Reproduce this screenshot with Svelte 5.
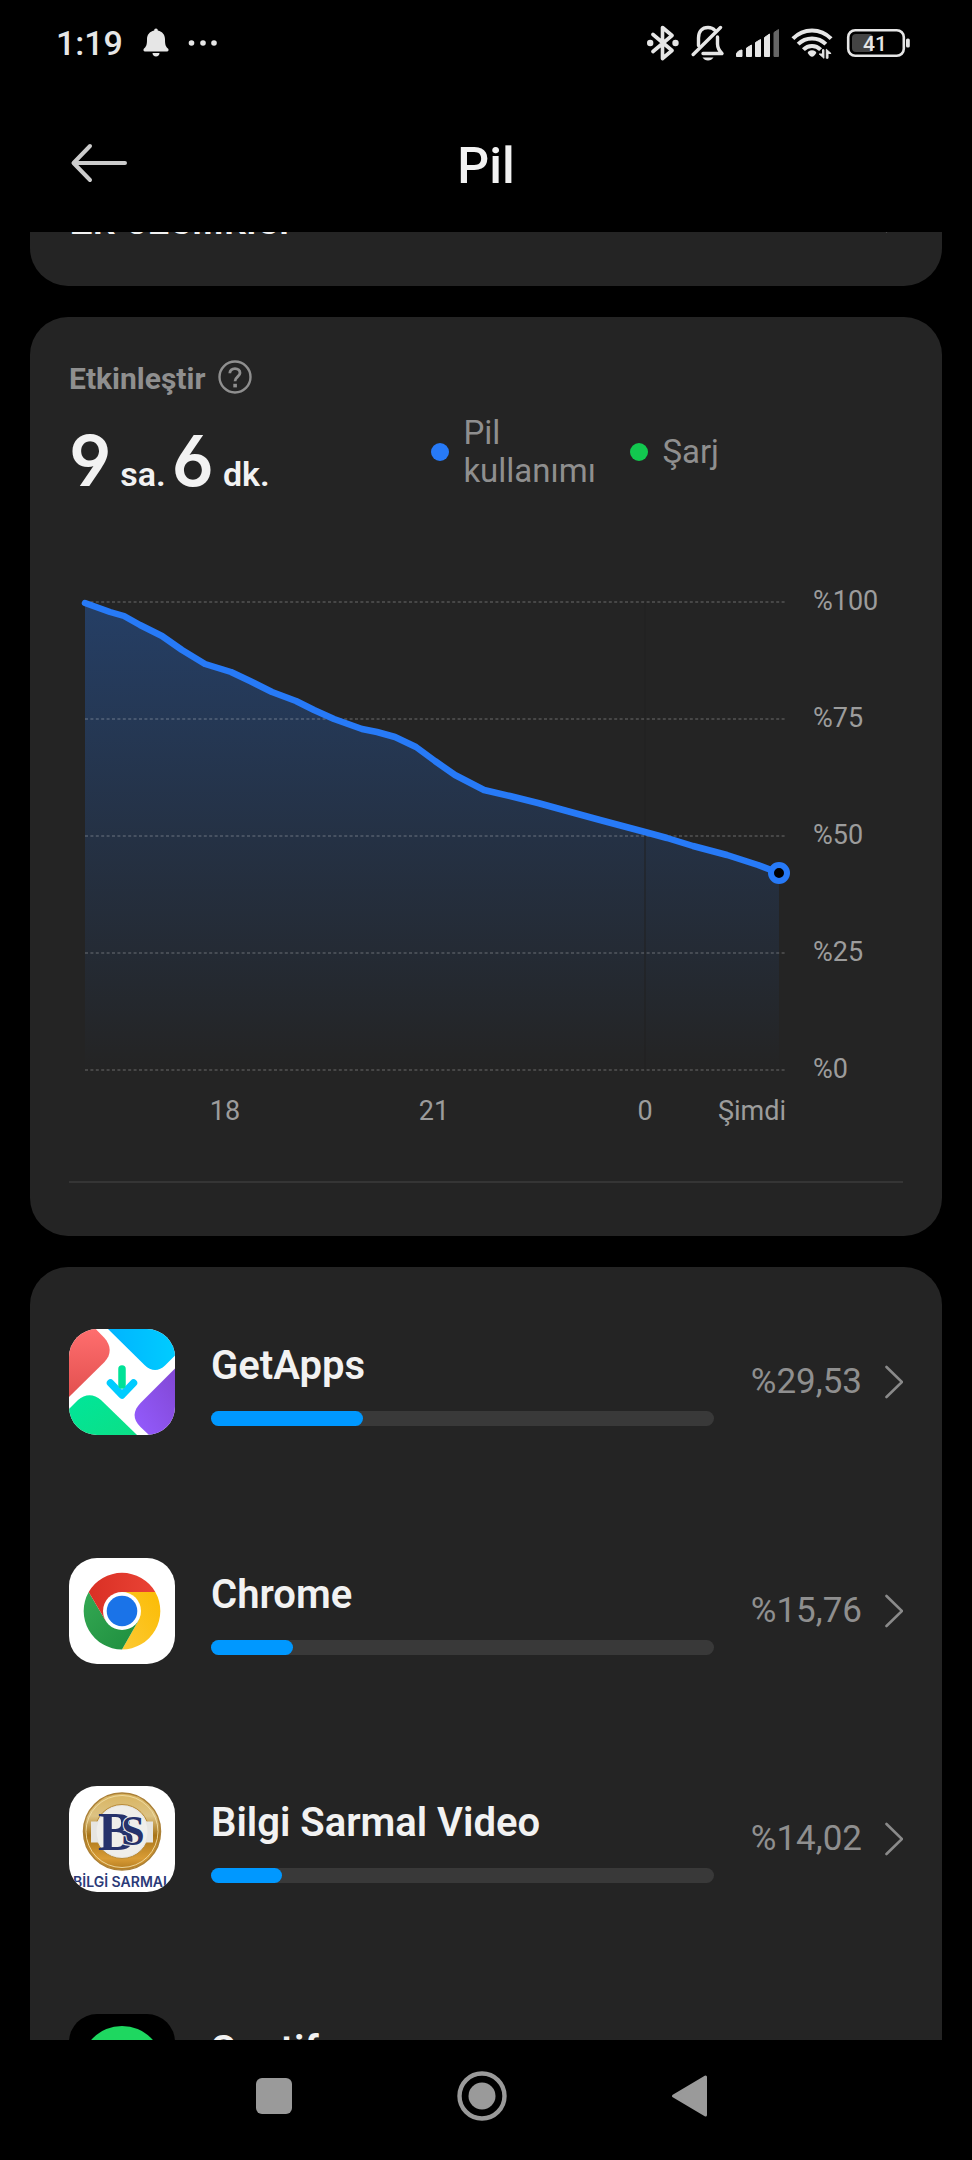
<script>
  const apps = [
    { id: 'getapps', name: 'GetApps', share: '%29,53', fill: 30.2 },
    { id: 'chrome', name: 'Chrome', share: '%15,76', fill: 16.3 },
    { id: 'bilgi', name: 'Bilgi Sarmal Video', share: '%14,02', fill: 14.2 },
    { id: 'spotify', name: 'Spotify', share: '%9,87', fill: 10 },
  ];

  // Battery level curve, in plot units: 694 wide, 468 high (0 = %100)
  const points = [
    [0, 1], [25, 10], [39, 14], [55, 23], [77, 34], [97, 48], [120, 62], [146, 70],
    [165, 79], [187, 90], [211, 99], [229, 108], [249, 117], [277, 127], [292, 130],
    [310, 135], [331, 145], [350, 159], [370, 173], [399, 188], [425, 194], [453, 201],
    [482, 209], [515, 218], [560, 230], [582, 236], [608, 244], [642, 253], [673, 263],
    [694, 271],
  ];
  const line = 'M' + points.map((p) => p.join(' ')).join('L');
  const area = line + 'V468H0Z';

  const levels = [100, 75, 50, 25, 0];
  const hours = [
    { label: '18', x: 140 },
    { label: '21', x: 349 },
    { label: '0', x: 560 },
  ];
</script>

{#snippet chevron()}
  <svg class="chevron" width="20" height="36" viewBox="0 0 20 36" aria-hidden="true">
    <path d="M3.500 3L19 18L3.500 33" fill="none" stroke="#8a8a8a" stroke-width="2.600" stroke-linecap="round" />
  </svg>
{/snippet}

<div class="screen">
  <div class="status">
    <span class="time">1:19</span>
    <svg class="bell" width="26" height="30" viewBox="0 0 26 30" aria-hidden="true">
      <path d="M13 0.500C14.200 0.500 14.800 1.400 14.800 2.600C19.500 3.600 22 7 22 11.500C22 17 22.800 18.600 25.200 20.800C26 22 25.500 23.500 24 23.500H2C0.500 23.500 0 22 0.800 20.800C3.200 18.600 4 17 4 11.500C4 7 6.500 3.600 11.200 2.600C11.200 1.400 11.800 0.500 13 0.500ZM9.500 25H16.500C16.500 27 15 28.500 13 28.500S9.500 27 9.500 25Z" fill="#e6e6e6" />
    </svg>
    <svg width="30" height="8" viewBox="0 0 30 8" aria-hidden="true">
      <circle cx="3.500" cy="4" r="2.800" fill="#e6e6e6" /><circle cx="15" cy="4" r="2.800" fill="#e6e6e6" /><circle cx="26" cy="4" r="2.800" fill="#e6e6e6" />
    </svg>

    <div class="indicators">
      <svg width="34" height="36" viewBox="0 0 34 36" aria-hidden="true">
        <path d="M6 9.500L25 25.500L15.500 33.500V2.500L25 10.500L6 26.500" fill="none" stroke="#e6e6e6" stroke-width="3.600" stroke-linejoin="round" stroke-linecap="round" />
        <circle cx="3.200" cy="18" r="3.200" fill="#e6e6e6" /><circle cx="28.500" cy="18" r="3.200" fill="#e6e6e6" />
      </svg>
      <svg width="34" height="36" viewBox="0 0 34 36" aria-hidden="true">
        <g fill="none" stroke="#e6e6e6" stroke-width="3.400" stroke-linecap="round">
          <path d="M7.500 20.500V13C7.500 6.500 11 2.500 17 2.500C20 2.500 22.300 3.500 24 5.500" />
          <path d="M26.500 12V19C26.500 23.500 28 25.500 31 28.500H12" stroke-linejoin="round" />
          <path d="M2.200 29.500L29.500 2.500" />
        </g>
        <path d="M11.500 32.500H22.500C21 34.500 19.500 35.500 17 35.500S13 34.500 11.500 32.500Z" fill="#e6e6e6" />
      </svg>
      <svg width="46" height="30" viewBox="0 0 46 30" aria-hidden="true">
        <path d="M1.500 26C1.500 24 5 22 7 22V28.500H1.500ZM11.500 20L16.500 17V28.500H11.500ZM20.500 14.500L25.500 11.500V28.500H20.500ZM29.500 9.500L34.500 6V28.500H29.500Z" fill="#e6e6e6" stroke="#e6e6e6" stroke-linejoin="round" />
        <path d="M39 4.500L43.500 1.500V28.500H39Z" fill="#666" stroke="#666" stroke-linejoin="round" />
      </svg>
      <svg width="42" height="34" viewBox="0 0 44 34" aria-hidden="true">
        <g fill="none" stroke="#e6e6e6" stroke-width="4.200">
          <path d="M2 12.500C13 1 31 1 42 12.500" />
          <path d="M7.500 18.200C15.500 10.200 28.500 10.200 36.500 18.200" />
          <path d="M13 24C18 18.800 26 18.800 31 24" />
        </g>
        <path d="M22 24.500C25 24.500 26.500 26 26.500 27.500C25 30 23.500 31.500 22 31.500S19 30 17.500 27.500C17.500 26 19 24.500 22 24.500Z" fill="#e6e6e6" />
        <path d="M34.500 24V33L29.500 28.500H33V24ZM37 33V23.500L42 28H38.800V33Z" fill="#e6e6e6" stroke="#e6e6e6" />
      </svg>
      <svg class="battery" width="66" height="30" viewBox="0 0 66 30" aria-hidden="true">
        <rect x="2.200" y="2.200" width="55.600" height="25.600" rx="7" fill="none" stroke="#e6e6e6" stroke-width="2.600" />
        <rect x="6" y="6" width="21" height="18" rx="4" fill="#444" />
        <rect x="60" y="10.500" width="3.800" height="9" rx="1.600" fill="#e6e6e6" />
        <text x="29" y="22.500" text-anchor="middle" class="charge">41</text>
      </svg>
    </div>
  </div>

  <header>
    <button class="back" aria-label="Geri">
      <svg width="58" height="42" viewBox="0 0 58 42" aria-hidden="true">
        <path d="M20 4L3.500 21L20 38M4 21H55" fill="none" stroke="#ccc" stroke-width="4" stroke-linecap="round" stroke-linejoin="round" />
      </svg>
    </button>
    <h1>Pil</h1>
  </header>

  <main>
    <section class="card extras">
      <a class="extra" href="#extras"><span>Ek özellikler</span>{@render chevron()}</a>
    </section>

    <section class="card usage">
      <div class="caption">
        <h2>Etkinleştir</h2>
        <button class="help" aria-label="Yardım">
          <svg width="36" height="40" viewBox="0 0 36 40" aria-hidden="true">
            <circle cx="18" cy="20" r="15.500" fill="none" stroke="#8f8f8f" stroke-width="2.400" />
            <path d="M12.800 16.300C12.800 13.300 15 11.600 18 11.600C21 11.600 23 13.500 23 16C23 19.500 18 19.800 18 24.300" fill="none" stroke="#8f8f8f" stroke-width="2.800" />
            <rect x="16.300" y="26.800" width="3.600" height="3.600" fill="#8f8f8f" />
          </svg>
        </button>
      </div>

      <div class="summary">
        <p class="duration">
          <b>9</b><span>sa.</span><b>6</b><span>dk.</span>
        </p>
        <ul class="legend">
          <li><i class="dot use"></i><span>Pil kullanımı</span></li>
          <li><i class="dot charging"></i><span>Şarj</span></li>
        </ul>
      </div>

      <svg class="chart" viewBox="0 0 834 560" role="img" aria-label="Pil kullanımı">
        <defs>
          <linearGradient id="fade" x1="0" y1="0" x2="0" y2="468" gradientUnits="userSpaceOnUse">
            <stop offset="0" stop-color="#277af7" stop-opacity="0.310" />
            <stop offset="1" stop-color="#277af7" stop-opacity="0" />
          </linearGradient>
        </defs>
        <g transform="translate(16 22)">
          <path d={area} fill="url(#fade)" />
          {#each levels as level, i}
            <path d="M0 {i * 117}H700" stroke="#fff" stroke-opacity="0.160" stroke-width="2" stroke-dasharray="3 2.400" />
            <text x="728" y={i * 117 + 8}>%{level}</text>
          {/each}
          <path d="M560 0V468" stroke="#1f1f1f" stroke-width="2" stroke-opacity="0.500" />
          <path d={line} fill="none" stroke="#277af7" stroke-width="6.500" stroke-linecap="round" stroke-linejoin="round" />
          <circle cx="694" cy="271" r="8" fill="#000" stroke="#277af7" stroke-width="6" />
          {#each hours as hour}
            <text x={hour.x} y="518" text-anchor="middle">{hour.label}</text>
          {/each}
          <text x="701" y="518" text-anchor="end">Şimdi</text>
        </g>
      </svg>
      <hr />
    </section>

    <section class="card apps">
      {#each apps as app}
        <a class="row" href="#{app.id}">
          <svg class="icon" viewBox="0 0 106 106" aria-hidden="true">
            {#if app.id === 'getapps'}
              <defs>
                <linearGradient id="ga-red" x1="0" y1="0" x2="0" y2="1"><stop stop-color="#ff6e6e" /><stop offset="1" stop-color="#e2504f" /></linearGradient>
                <linearGradient id="ga-blue" x1="0" y1="0" x2="1" y2="0"><stop stop-color="#00b4ff" /><stop offset="1" stop-color="#00ccff" /></linearGradient>
                <linearGradient id="ga-violet" x1="1" y1="0" x2="0" y2="1"><stop stop-color="#8247d4" /><stop offset="1" stop-color="#945cff" /></linearGradient>
                <linearGradient id="ga-green" x1="0" y1="0" x2="1" y2="1"><stop stop-color="#00e69a" /><stop offset="1" stop-color="#0cdf86" /></linearGradient>
              </defs>
              <rect width="106" height="106" fill="#fff" />
              <path d="M0 0H26.700L35 8.500C42.500 16.500 42.500 25.500 35.500 33L0 68Z" fill="url(#ga-red)" />
              <path d="M39 0L75.500 36C82 42.500 90 42.500 96 36.500L106 26.500V0Z" fill="url(#ga-blue)" />
              <path d="M106 39.500L72 73.500C63.500 82 63.500 90 71.500 98L80 106H106Z" fill="url(#ga-violet)" />
              <path d="M0 80L9 71C16 64.500 25 64.500 32 71L68 106H0Z" fill="url(#ga-green)" />
              <path d="M41.500 54L53 66L64.500 54" fill="none" stroke="#00ccff" stroke-width="7.500" stroke-linecap="round" stroke-linejoin="round" />
              <path d="M53 40V56" fill="none" stroke="#00e297" stroke-width="7.500" stroke-linecap="round" />
            {:else if app.id === 'chrome'}
              <defs>
                <linearGradient id="ch-red" x1="0" y1="0" x2="1" y2="0"><stop stop-color="#d93025" /><stop offset="1" stop-color="#ea4335" /></linearGradient>
                <linearGradient id="ch-green" x1="0" y1="0" x2="1" y2="1"><stop stop-color="#34a853" /><stop offset="1" stop-color="#1e8e3e" /></linearGradient>
                <linearGradient id="ch-yellow" x1="1" y1="0" x2="0" y2="1"><stop stop-color="#fbbc04" /><stop offset="1" stop-color="#fcc934" /></linearGradient>
              </defs>
              <rect width="106" height="106" fill="#fff" />
              <path d="M53 34H86.300A38.500 38.500 0 0 1 53 91.500L69.500 62.500L53 53Z" fill="url(#ch-yellow)" />
              <path d="M19.700 34A38.500 38.500 0 0 0 53 91.500L69.500 62.500L53 53L36.500 62.500Z" fill="url(#ch-green)" />
              <path d="M19.700 34A38.500 38.500 0 0 1 86.300 34H53V53L36.500 62.500Z" fill="url(#ch-red)" />
              <circle cx="53" cy="53" r="19" fill="#fff" /><circle cx="53" cy="53" r="15.300" fill="#1a73e8" />
            {:else if app.id === 'bilgi'}
              <defs>
                <linearGradient id="gold" x1="0" y1="0" x2="0" y2="1"><stop stop-color="#d9b45e" /><stop offset="0.300" stop-color="#dcc283" /><stop offset="0.550" stop-color="#a87418" /><stop offset="0.850" stop-color="#d99c35" /><stop offset="1" stop-color="#b27a20" /></linearGradient>
              </defs>
              <rect width="106" height="106" fill="#fff" />
              <circle cx="53" cy="45.500" r="38.500" fill="url(#gold)" stroke="#ab8037" stroke-width="1.500" />
              <circle cx="53" cy="45.500" r="36" fill="none" stroke="#f0dca5" stroke-width="0.900" />
              <circle cx="53" cy="45.500" r="27" fill="#e6e5e1" stroke="#b98a35" />
              <path d="M22 35.500H29L33 32H73L77 35.500H84V56.500H77L73 60H33L29 56.500H22Z" fill="#e6e5e1" />
              <circle cx="53" cy="45.500" r="25.500" fill="#efeeea" />
              <text x="47" y="64" text-anchor="middle" class="mark">B</text>
              <text x="64" y="59" text-anchor="middle" class="mark front">S</text>
              <text x="53" y="101" text-anchor="middle" class="wordmark">BİLGİ SARMAL</text>
            {:else}
              <rect width="106" height="106" fill="#000" />
              <circle cx="53" cy="53" r="41" fill="#1ed760" />
              <path d="M28 41C44 36 64 38 79 46M30 54C44 50 60 51 74 59M32 66C44 63 57 64 69 71" fill="none" stroke="#000" stroke-width="6" stroke-linecap="round" />
            {/if}
          </svg>
          <div class="detail">
            <span class="name">{app.name}</span>
            <span class="track"><span class="fill" style="width: {app.fill}%"></span></span>
          </div>
          <span class="share">{app.share}</span>
          {@render chevron()}
        </a>
      {/each}
    </section>
  </main>

  <nav>
    <button aria-label="Son uygulamalar">
      <svg width="52" height="52" viewBox="0 0 52 52" aria-hidden="true"><rect x="8" y="8" width="36" height="36" rx="6" fill="#9a9a9a" /></svg>
    </button>
    <button aria-label="Ana ekran">
      <svg width="52" height="52" viewBox="0 0 52 52" aria-hidden="true"><circle cx="26" cy="26" r="22.500" fill="none" stroke="#9a9a9a" stroke-width="4.400" /><circle cx="26" cy="26" r="13.500" fill="#9a9a9a" /></svg>
    </button>
    <button aria-label="Geri dön">
      <svg width="52" height="52" viewBox="0 0 52 52" aria-hidden="true"><path d="M9.500 26L41.500 7V45Z" fill="#9a9a9a" stroke="#9a9a9a" stroke-width="3" stroke-linejoin="round" /></svg>
    </button>
  </nav>
</div>

<style>
  :global(body) {
    background: #000;
  }
  .screen {
    display: flex;
    flex-direction: column;
    height: 100vh;
    overflow: hidden;
    background: #000;
    color: #f2f2f2;
    font-family: Roboto, "Noto Sans", sans-serif;
  }
  svg {
    display: block;
    flex: none;
  }
  button {
    padding: 0;
    border: 0;
    background: none;
    cursor: pointer;
  }
  a {
    color: inherit;
    text-decoration: none;
  }
  .status {
    display: flex;
    align-items: center;
    flex: none;
    height: 86px;
    padding: 0 60px 0 56px;
  }
  .time {
    margin-right: 20px;
    color: #e6e6e6;
    font-size: 34px;
    font-weight: 500;
    line-height: 40px;
  }
  .bell {
    margin-right: 19px;
  }
  .indicators {
    display: flex;
    align-items: center;
    gap: 10px;
    margin-left: auto;
  }
  .battery {
    margin-left: 3px;
  }
  .charge {
    fill: #e6e6e6;
    font-size: 21px;
    font-weight: 500;
  }
  header {
    display: grid;
    grid-template-columns: 58px 1fr 58px;
    align-items: start;
    flex: none;
    height: 146px;
    padding: 0 70px;
  }
  .back {
    margin-top: 56px;
  }
  h1 {
    margin: 50px 0 0;
    font-size: 50px;
    font-weight: 500;
    line-height: 60px;
    text-align: center;
  }
  main {
    display: flex;
    flex-direction: column;
    gap: 31px;
    flex: 1;
    min-height: 0;
    overflow: hidden;
    padding: 0 30px;
  }
  .card {
    flex: none;
    border-radius: 38px;
    background: #242424;
  }
  .extras {
    margin-top: -84px;
  }
  .extra {
    display: flex;
    align-items: flex-start;
    justify-content: space-between;
    padding: 50px 39px 44px;
    font-size: 42px;
    font-weight: 500;
    line-height: 44px;
  }
  .name {
    font-size: 40px;
    font-weight: 600;
    line-height: 48px;
  }
  .usage {
    padding: 40px 39px 53px;
  }
  .caption {
    display: flex;
    gap: 12px;
  }
  h2 {
    margin: 0;
    color: #8f8f8f;
    font-size: 30px;
    font-weight: 700;
    line-height: 44px;
  }
  .help {
    align-self: flex-start;
  }
  .summary {
    display: grid;
    grid-template-columns: 13fr 17fr;
    align-items: start;
    margin-top: 13px;
  }
  .duration {
    display: flex;
    align-items: baseline;
    gap: 6px;
    margin: 0;
  }
  .duration b {
    font-family: Inter, sans-serif;
    font-feature-settings: "ss01", "cv03", "cv04";
    font-size: 70px;
    font-weight: 600;
    line-height: 94px;
  }
  .duration span {
    padding-left: 3px;
    font-size: 34px;
    font-weight: 600;
    line-height: 40px;
  }
  .legend {
    display: flex;
    align-items: center;
    gap: 35px;
    margin: 0;
    padding-left: 1px;
    list-style: none;
    color: #8f8f8f;
    font-size: 33px;
    line-height: 38px;
  }
  .legend li {
    display: flex;
    align-items: center;
    gap: 14px;
  }
  .legend span {
    max-width: 132px;
  }
  .dot {
    flex: none;
    width: 18px;
    height: 18px;
    border-radius: 50%;
  }
  .use {
    background: #277af7;
  }
  .charging {
    background: #12c84f;
  }
  .chart {
    width: 100%;
    height: auto;
    margin-top: 72px;
  }
  .chart text {
    fill: #9c9c9c;
    font-size: 27px;
  }
  hr {
    height: 2px;
    margin: 41px 0 0;
    border: 0;
    background: #353535;
  }
  .apps {
    padding-top: 1px;
  }
  .row {
    display: flex;
    align-items: center;
    padding: 61px 39px;
  }
  .icon {
    width: 106px;
    height: 106px;
    border-radius: 28px;
    overflow: hidden;
  }
  .mark {
    fill: #26326b;
    font-family: "Liberation Serif", serif;
    font-size: 54px;
    font-weight: 700;
  }
  .front {
    font-size: 42px;
    stroke: #efeeea;
    stroke-width: 2px;
    paint-order: stroke;
  }
  .wordmark {
    fill: #2b3a78;
    font-family: Inter, sans-serif;
    font-size: 14px;
    font-weight: 600;
  }
  .row + .row {
    padding-top: 62px;
    padding-bottom: 61px;
  }
  .row + .row + .row {
    padding-top: 61px;
  }
  .detail {
    display: flex;
    flex: 1;
    flex-direction: column;
    align-self: flex-start;
    gap: 21px;
    min-width: 0;
    padding: 13px 35px 0 36px;
  }
  .track {
    height: 15px;
    border-radius: 8px;
    background: #393939;
  }
  .fill {
    display: block;
    height: 100%;
    border-radius: 8px;
    background: #0098ff;
  }
  .share {
    min-width: 113px;
    margin-right: 21px;
    color: #8f8f8f;
    font-size: 35px;
    line-height: 42px;
    text-align: right;
  }
  nav {
    display: flex;
    align-items: center;
    justify-content: center;
    gap: 156px;
    flex: none;
    height: 120px;
    padding: 0 8px 8px 0;
    box-sizing: border-box;
  }
</style>
